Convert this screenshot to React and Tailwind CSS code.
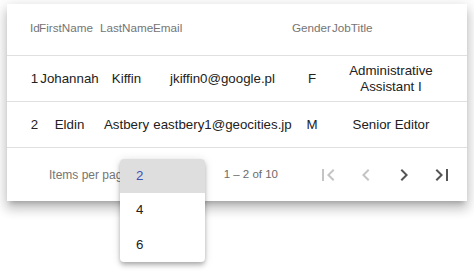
import React from "react";

const cols = "grid grid-cols-[9px_61px_53px_139px_40px_118px]";

function Icon({ d, className }) {
  return (
    <svg viewBox="0 0 24 24" width="24" height="24" className={className} fill="currentColor">
      <path d={d} />
    </svg>
  );
}

export default function App() {
  return (
    <div className="relative w-[474px] h-[279px] bg-white overflow-hidden font-['Liberation_Sans',Arial,sans-serif]">
      <div className="ml-[7px] mt-[4px] w-[460px] bg-white shadow-[0_5px_5px_-3px_rgba(0,0,0,0.2),0_8px_10px_1px_rgba(0,0,0,0.14),0_3px_14px_2px_rgba(0,0,0,0.12)]">
        <div className={`${cols} h-[52px] pl-[23px] items-center border-b border-[#e0e0e0] pb-[3px] text-[11.7px] text-[#757575] whitespace-nowrap`}>
          <div>Id</div>
          <div>FirstName</div>
          <div>LastName</div>
          <div>Email</div>
          <div>Gender</div>
          <div>JobTitle</div>
        </div>
        <div className={`${cols} h-[46px] pl-[23px] items-center border-b border-[#e0e0e0] text-[13.3px] text-[#212121] text-center leading-[16px]`}>
          <div>1</div>
          <div>Johannah</div>
          <div>Kiffin</div>
          <div>jkiffin0@google.pl</div>
          <div>F</div>
          <div>Administrative<br />Assistant I</div>
        </div>
        <div className={`${cols} h-[46px] pl-[23px] items-center border-b border-[#e0e0e0] text-[13.3px] text-[#212121] text-center whitespace-nowrap`}>
          <div>2</div>
          <div>Eldin</div>
          <div>Astbery</div>
          <div>eastbery1@geocities.jp</div>
          <div>M</div>
          <div>Senior Editor</div>
        </div>
        <div className="flex h-[53px] items-center pl-[42px] pr-[6px] text-[12px] text-[#757575]">
          <div className="whitespace-nowrap">Items per page</div>
          <div className="flex-1" />
          <div className="mr-[31px] whitespace-nowrap text-[11.5px] text-[#6b6b6b]">1 – 2 of 10</div>
          <div className="flex">
            <div className="w-[38px] flex justify-center text-[#c4c4c4]">
              <Icon d="M18.41 16.59L13.82 12l4.59-4.59L17 6l-6 6 6 6zM6 6h2v12H6z" />
            </div>
            <div className="w-[38px] flex justify-center text-[#c4c4c4]">
              <Icon d="M15.41 7.41L14 6l-6 6 6 6 1.41-1.41L10.83 12z" />
            </div>
            <div className="w-[38px] flex justify-center text-[#555]">
              <Icon d="M10 6L8.59 7.41 13.17 12l-4.58 4.59L10 18l6-6z" />
            </div>
            <div className="w-[38px] flex justify-center text-[#555]">
              <Icon d="M5.59 7.41L10.18 12l-4.59 4.59L7 18l6-6-6-6zM16 6h2v12h-2z" />
            </div>
          </div>
        </div>
      </div>
      <div className="absolute left-[120px] top-[159px] w-[85px] rounded-[4px] bg-white overflow-hidden text-[13.3px] text-[#212121] shadow-[0_2px_4px_-1px_rgba(0,0,0,0.2),0_4px_5px_0_rgba(0,0,0,0.14),0_1px_10px_0_rgba(0,0,0,0.12)]">
        <div className="h-[34px] flex items-center pl-[16px] bg-[#dedede] text-[#3f51b5]">2</div>
        <div className="h-[34px] flex items-center pl-[16px]">4</div>
        <div className="h-[35px] flex items-center pl-[16px]">6</div>
      </div>
    </div>
  );
}
